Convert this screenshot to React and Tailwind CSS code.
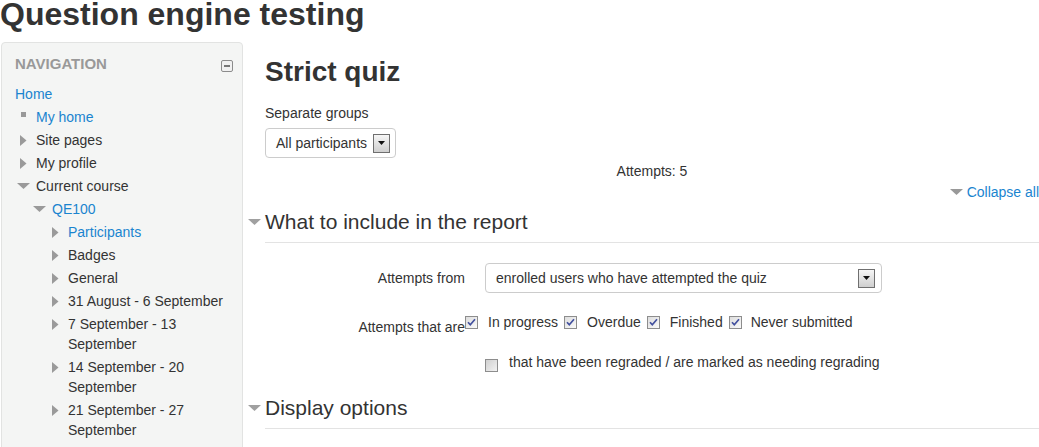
import React from "react";

const LINK = "text-[#1a84cf]";

function TriRight() {
  return (
    <svg width="7" height="11" viewBox="0 0 7 11">
      <path d="M0 0L6.5 5.5L0 11Z" fill="#9a9a9a" />
    </svg>
  );
}

function TriDown({ color = "#9a9a9a" }) {
  return (
    <svg width="13" height="6" viewBox="0 0 13 6">
      <path d="M0 0H13L6.5 6Z" fill={color} />
    </svg>
  );
}

function NavItem({ level, icon, label, link }) {
  const pad = { 1: "pl-[14px]", 2: "pl-[30px]", 3: "pl-[46px]" }[level];
  return (
    <li className={`flex ${pad} pb-[3px]`}>
      <span className="w-[14px] h-5 mr-[6px] shrink-0 flex items-center justify-center">
        {icon === "right" && <TriRight />}
        {icon === "down" && <TriDown />}
        {icon === "bullet" && <span className="self-start mt-[5px] w-[5px] h-[5px] bg-[#999]" />}
      </span>
      <span className={`min-w-0 flex-1 ${link ? LINK : ""}`}>{label}</span>
    </li>
  );
}

function DropButton() {
  return (
    <span className="w-[17px] h-[19px] shrink-0 border border-[#6f6f6f] bg-linear-to-b from-[#f6f6f6] to-[#cfcfcf] flex items-center justify-center">
      <svg width="7" height="4" viewBox="0 0 7 4">
        <path d="M0 0H7L3.5 4Z" fill="#111" />
      </svg>
    </span>
  );
}

function Checkbox({ checked }) {
  return (
    <svg width="13" height="13" viewBox="0 0 13 13" className="shrink-0">
      <defs>
        <linearGradient id="cbOn" x1="0" y1="0" x2="1" y2="1">
          <stop offset="0" stopColor="#dcdcdc" />
          <stop offset="1" stopColor="#fbfbfb" />
        </linearGradient>
        <linearGradient id="cbOff" x1="0" y1="0" x2="1" y2="1">
          <stop offset="0" stopColor="#cfcfcf" />
          <stop offset="1" stopColor="#f4f4f4" />
        </linearGradient>
      </defs>
      <rect x="0.5" y="0.5" width="12" height="12" fill={checked ? "url(#cbOn)" : "url(#cbOff)"} stroke="#8d8d8d" />
      {checked && <path d="M3 6.2L5.3 8.8L10 3.3" stroke="#42509e" strokeWidth="1.7" fill="none" />}
    </svg>
  );
}

function Legend({ children, className = "" }) {
  return (
    <div className={`flex items-start -ml-[17px] ${className}`}>
      <span className="w-[17px] shrink-0 mt-[9px] flex">
        <TriDown color="#a0a0a0" />
      </span>
      <span className="flex-1 text-[21px] leading-6 pb-2 border-b border-[#e3e3e3]">{children}</span>
    </div>
  );
}

export default function App() {
  return (
    <div className="h-[447px] overflow-hidden bg-white text-[#333] text-[14px] leading-5 [font-family:'Liberation_Sans',Arial,sans-serif]">
      <h1 className="text-[32px] font-bold leading-[28px]">Question engine testing</h1>

      <div className="flex items-start mt-[14px]">
        <aside className="ml-px w-[242px] shrink-0 bg-[#f4f5f4] border border-[#e2e3e2] rounded-[4px] pt-[11px] pb-6">
          <div className="flex items-center justify-between pl-[13px] pr-[9px] mb-[10px]">
            <span className="text-[15px] font-bold leading-5 text-[#999]">NAVIGATION</span>
            <svg width="12" height="12" viewBox="0 0 12 12" className="mt-[3px]">
              <rect x="0.5" y="0.5" width="11" height="11" rx="1.5" fill="#f1f1f1" stroke="#8c8c8c" />
              <rect x="3" y="5" width="6" height="2" fill="#777" />
            </svg>
          </div>
          <ul className="pr-[12px]">
            <li className={`pl-[13px] pb-[3px] ${LINK}`}>Home</li>
            <NavItem level={1} icon="bullet" label="My home" link />
            <NavItem level={1} icon="right" label="Site pages" />
            <NavItem level={1} icon="right" label="My profile" />
            <NavItem level={1} icon="down" label="Current course" />
            <NavItem level={2} icon="down" label="QE100" link />
            <NavItem level={3} icon="right" label="Participants" link />
            <NavItem level={3} icon="right" label="Badges" />
            <NavItem level={3} icon="right" label="General" />
            <NavItem level={3} icon="right" label="31 August - 6 September" />
            <NavItem level={3} icon="right" label="7 September - 13 September" />
            <NavItem level={3} icon="right" label="14 September - 20 September" />
            <NavItem level={3} icon="right" label="21 September - 27 September" />
            <NavItem level={3} icon="right" label="28 September - 4 October" />
          </ul>
        </aside>

        <main className="flex-1 min-w-0 ml-[22px]">
          <h2 className="mt-[14px] text-[28px] font-bold leading-8">Strict quiz</h2>
          <div className="mt-[15px]">Separate groups</div>
          <div className="mt-[5px] w-fit h-[30px] flex items-center gap-[6px] border border-[#ccc] rounded-[4px] bg-white pl-[10px] pr-[5px]">
            <span>All participants</span>
            <DropButton />
          </div>
          <div className="mt-[3px] text-center">Attempts: 5</div>
          <div className="mt-px flex justify-end items-center gap-[4px]">
            <TriDown color="#999" />
            <span className={LINK}>Collapse all</span>
          </div>

          <Legend className="mt-[8px]">What to include in the report</Legend>

          <div className="flex items-center mt-[20px]">
            <div className="w-[200px] shrink-0 text-right">Attempts from</div>
            <div className="ml-[20px] w-[397px] h-[30px] flex items-center border border-[#ccc] rounded-[4px] bg-white pl-[10px] pr-[6px]">
              <span className="flex-1">enrolled users who have attempted the quiz</span>
              <DropButton />
            </div>
          </div>

          <div className="flex items-start mt-[19px]">
            <div className="w-[200px] shrink-0 text-right pt-[5px]">Attempts that are</div>
            <div className="flex items-center h-5">
              <Checkbox checked />
              <span className="pl-[10px] pr-[6px]">In progress</span>
              <Checkbox checked />
              <span className="pl-[10px] pr-[6px]">Overdue</span>
              <Checkbox checked />
              <span className="pl-[10px] pr-[6px]">Finished</span>
              <Checkbox checked />
              <span className="pl-[9px]">Never submitted</span>
            </div>
          </div>

          <div className="flex items-start ml-[220px] mt-[15px]">
            <span className="mt-[7px] flex">
              <Checkbox checked={false} />
            </span>
            <span className="pl-[11px]">that have been regraded / are marked as needing regrading</span>
          </div>

          <Legend className="mt-[24px]">Display options</Legend>
        </main>
      </div>
    </div>
  );
}
